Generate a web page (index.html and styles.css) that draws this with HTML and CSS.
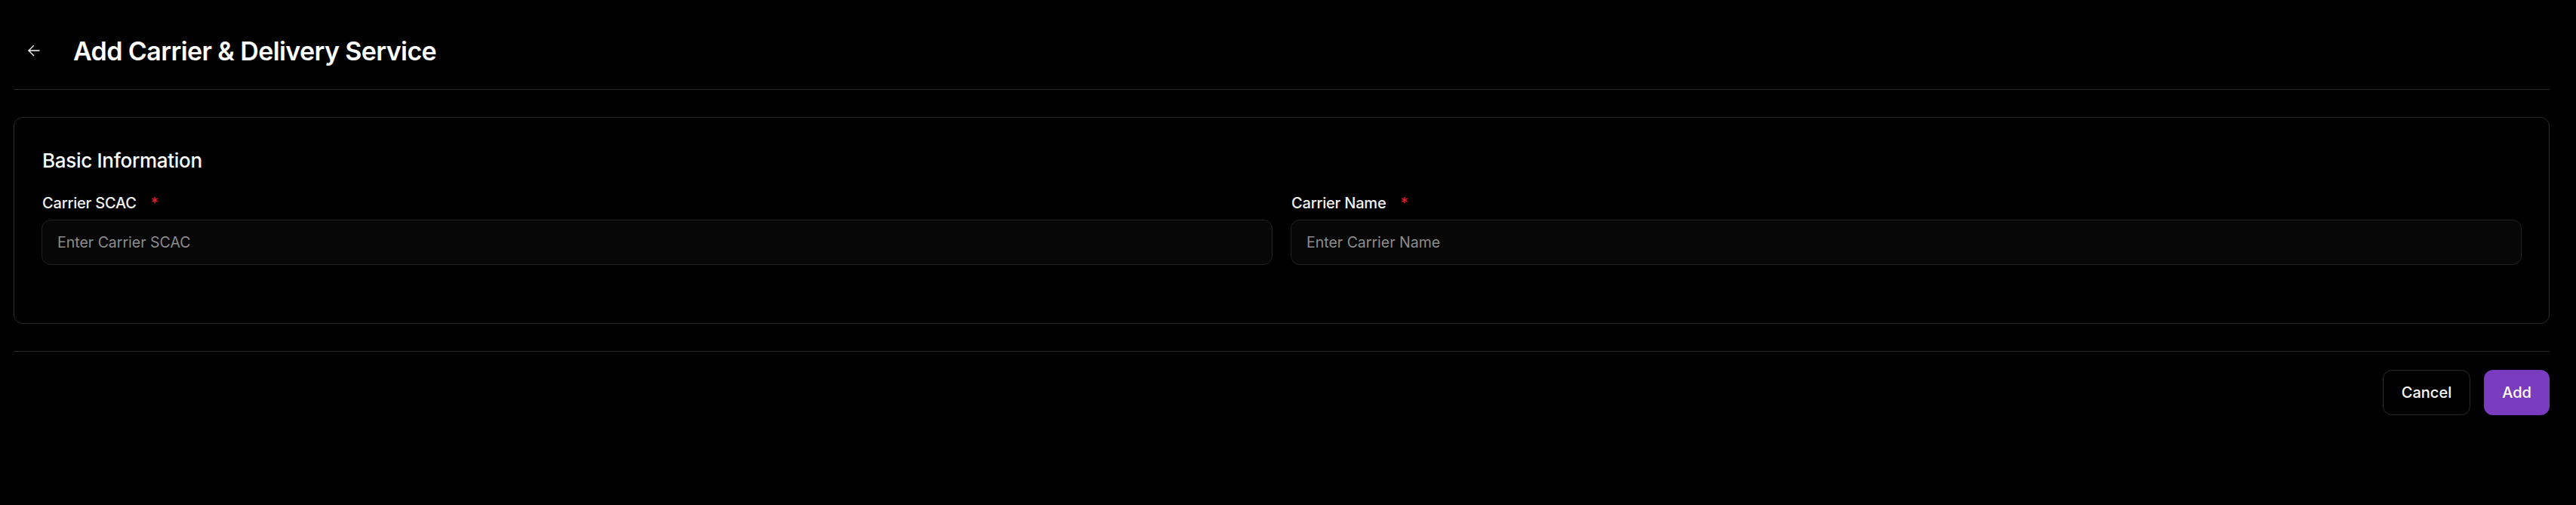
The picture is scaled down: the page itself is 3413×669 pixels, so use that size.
FILE: index.html
```html
<!DOCTYPE html>
<html lang="en">
<head>
<meta charset="utf-8">
<title>Add Carrier &amp; Delivery Service</title>
<link rel="stylesheet" href="styles.css">
</head>
<body>
<div class="page">
  <header class="header">
    <button class="back" type="button" aria-label="Back">
      <svg viewBox="0 0 16 16" width="16" height="16" fill="none" stroke="currentColor" stroke-width="1.4" stroke-linecap="round" stroke-linejoin="round"><path d="M15 8H1"/><path d="M7.5 1.5L1 8l6.5 6.5"/></svg>
    </button>
    <h1 class="title">Add Carrier &amp; Delivery Service</h1>
  </header>

  <section class="card">
    <h2 class="card-title">Basic Information</h2>
    <div class="fields">
      <div class="field">
        <label class="label">Carrier SCAC <span class="req">*</span></label>
        <input class="input" type="text" placeholder="Enter Carrier SCAC">
      </div>
      <div class="field">
        <label class="label">Carrier Name <span class="req">*</span></label>
        <input class="input" type="text" placeholder="Enter Carrier Name">
      </div>
    </div>
  </section>

  <footer class="actions">
    <button class="btn btn-cancel" type="button">Cancel</button>
    <button class="btn btn-add" type="button">Add</button>
  </footer>
</div>
</body>
</html>
```

FILE: styles.css
```css
* { box-sizing: border-box; }
html, body { margin: 0; padding: 0; background: #000; }
body {
  font-family: Inter, "Liberation Sans", Arial, sans-serif;
  color: #fff;
}
.page {
  padding: 0 35px 0 18px;
}
.header {
  display: flex;
  align-items: center;
  height: 119px;
  border-bottom: 1px solid #2a2a2a;
  padding-left: 19px;
  padding-top: 16px;
}
.back {
  display: flex;
  align-items: center;
  justify-content: center;
  background: none;
  border: 0;
  padding: 0;
  color: #fff;
  width: 16px;
  height: 16px;
  cursor: pointer;
}
.title {
  margin: 0 0 0 44px;
  font-size: 34px;
  font-weight: 600;
  letter-spacing: -0.6px;
  color: #fff;
}
.card {
  margin-top: 36px;
  border: 1px solid #2a2a2a;
  border-radius: 12px;
  padding: 41px 36px 77px 36px;
}
.card-title {
  margin: 0 0 28px 1px;
  font-size: 26px;
  font-weight: 500;
  letter-spacing: -0.3px;
  line-height: 32px;
}
.fields {
  display: grid;
  grid-template-columns: 1fr 1fr;
  gap: 24px;
}
.field {
  display: flex;
  flex-direction: column;
  gap: 10px;
}
.label {
  font-size: 20px;
  font-weight: 500;
  line-height: 24px;
  letter-spacing: -0.2px;
  color: #f2f2f2;
  padding-left: 1px;
}
.req {
  color: #e0202a;
  margin-left: 14px;
}
.input {
  height: 60px;
  width: 100%;
  background: #070707;
  border: 1px solid #222;
  border-radius: 12px;
  padding: 0 20px;
  font-family: inherit;
  font-size: 19.5px;
  color: #fff;
  outline: none;
}
.input::placeholder { color: #8c8c8c; }
.actions {
  margin-top: 36px;
  border-top: 1px solid #2a2a2a;
  padding-top: 24px;
  display: flex;
  justify-content: flex-end;
  gap: 18px;
}
.btn {
  height: 60px;
  border-radius: 12px;
  font-family: inherit;
  font-size: 20px;
  font-weight: 500;
  color: #fff;
  cursor: pointer;
}
.btn-cancel {
  width: 116px;
  background: #000;
  border: 1px solid #2a2a2a;
}
.btn-add {
  width: 87px;
  background: #7a3cbf;
  border: 0;
}
```
